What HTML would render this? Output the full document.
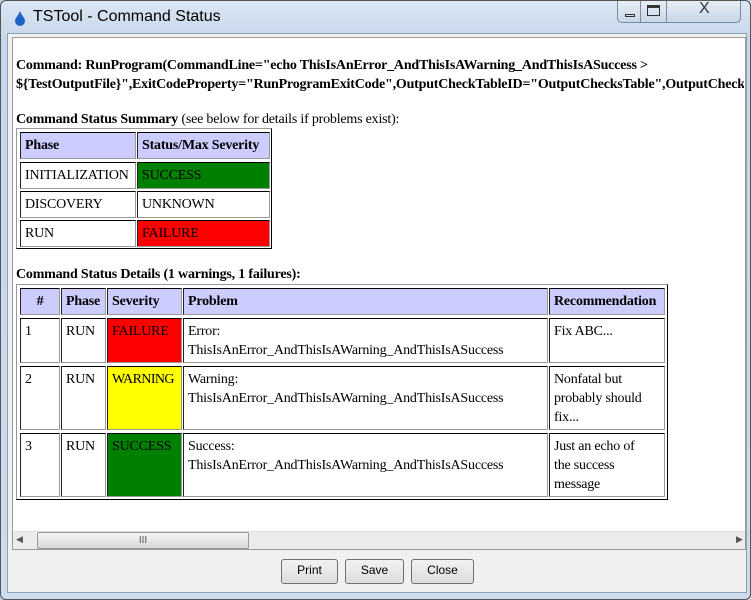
<!DOCTYPE html><html><head><style>
body{margin:0;width:751px;height:600px;overflow:hidden;background:#bcd0e6;font-family:"Liberation Serif",serif;font-size:14px;position:relative}
.a{position:absolute;box-sizing:border-box}
.c{position:absolute;box-sizing:border-box;border:1px solid #000;border-right-color:#999;border-bottom-color:#999;border-left-color:#222;padding:3px 4px;line-height:19px;color:#000;letter-spacing:-0.2px}
.h{background:#ccccff;font-weight:bold}
.btn{position:absolute;top:559px;height:23px;border:1px solid #707070;border-radius:3px;background:linear-gradient(#f2f2f2,#dcdcdc);font-family:"Liberation Sans",sans-serif;font-size:12px;text-align:center;line-height:21px}
</style></head><body>
<div class="a" style="left:0;top:0;width:751px;height:600px;border:1px solid #555;border-radius:6px;background:linear-gradient(#dbe6f3,#c5d6ea 40px,#cddcec)"></div>
<svg class="a" style="left:14px;top:10px" width="12" height="16"><path d="M6 1 C4 6 1 8 1 11 A5 5 0 0 0 11 11 C11 8 8 6 6 1Z" fill="#1d63c6"/></svg>
<div class="a" style="left:33px;top:8px;font-family:'Liberation Sans',sans-serif;font-size:16px;color:#000">TSTool - Command Status</div>
<div class="a" style="left:617px;top:1px;width:124px;height:22px;border:1px solid #7a8ba0;border-top:none;border-radius:0 0 5px 5px;background:linear-gradient(#e8eef6,#c9d6e6)"></div>
<div class="a" style="left:640px;top:1px;width:1px;height:21px;background:#7a8ba0"></div>
<div class="a" style="left:666px;top:1px;width:1px;height:21px;background:#7a8ba0"></div>
<div class="a" style="left:625px;top:14px;width:10px;height:3px;border:1px solid #333"></div>
<div class="a" style="left:647px;top:5px;width:13px;height:11px;border:1px solid #333;border-top-width:3px"></div>
<div class="a" style="left:699px;top:0px;font-family:'Liberation Sans',sans-serif;font-size:16px;color:#333">X</div>
<div class="a" style="left:7px;top:33px;width:740px;height:560px;background:#f0f0f0;border:1px solid #8da0b8"></div>
<div class="a" style="left:12px;top:37px;width:734px;height:513px;background:#fff;border:1px solid #999"></div>
<div class="a" style="left:16px;top:56px;font-weight:bold;white-space:nowrap;line-height:19px;width:728px;overflow:hidden;letter-spacing:-0.2px">Command: RunProgram(CommandLine="echo ThisIsAnError_AndThisIsAWarning_AndThisIsASuccess &gt;<br>${TestOutputFile}",ExitCodeProperty="RunProgramExitCode",OutputCheckTableID="OutputChecksTable",OutputCheckTable</div>
<div class="a" style="left:16px;top:110px;line-height:19px;letter-spacing:-0.2px"><b>Command Status Summary</b> (see below for details if problems exist):</div>
<div class="a" style="left:16px;top:128px;width:256px;height:121px;border:1px solid #999;border-right-color:#000;border-bottom-color:#000"></div>
<div class="c h" style="left:20px;top:132px;width:116px;height:27px">Phase</div>
<div class="c h" style="left:137px;top:132px;width:133px;height:27px">Status/Max Severity</div>
<div class="c" style="left:20px;top:162px;width:116px;height:27px">INITIALIZATION</div>
<div class="c" style="left:137px;top:162px;width:133px;height:27px;background:#008000">SUCCESS</div>
<div class="c" style="left:20px;top:191px;width:116px;height:27px">DISCOVERY</div>
<div class="c" style="left:137px;top:191px;width:133px;height:27px">UNKNOWN</div>
<div class="c" style="left:20px;top:220px;width:116px;height:27px">RUN</div>
<div class="c" style="left:137px;top:220px;width:133px;height:27px;background:#f00">FAILURE</div>
<div class="a" style="left:16px;top:265px;font-weight:bold;line-height:19px;letter-spacing:-0.2px">Command Status Details (1 warnings, 1 failures):</div>
<div class="a" style="left:16px;top:284px;width:652px;height:216px;border:1px solid #999;border-right-color:#000;border-bottom-color:#000"></div>
<div class="c h" style="left:20px;top:288px;width:40px;height:27px;text-align:center">#</div>
<div class="c h" style="left:61px;top:288px;width:45px;height:27px">Phase</div>
<div class="c h" style="left:107px;top:288px;width:75px;height:27px">Severity</div>
<div class="c h" style="left:183px;top:288px;width:365px;height:27px">Problem</div>
<div class="c h" style="left:549px;top:288px;width:116px;height:27px">Recommendation</div>
<div class="c" style="left:20px;top:318px;width:40px;height:45px">1</div>
<div class="c" style="left:61px;top:318px;width:45px;height:45px">RUN</div>
<div class="c" style="left:107px;top:318px;width:75px;height:45px;background:#f00">FAILURE</div>
<div class="c" style="left:183px;top:318px;width:365px;height:45px">Error:<br>ThisIsAnError_AndThisIsAWarning_AndThisIsASuccess</div>
<div class="c" style="left:549px;top:318px;width:116px;height:45px">Fix ABC...</div>
<div class="c" style="left:20px;top:366px;width:40px;height:64px">2</div>
<div class="c" style="left:61px;top:366px;width:45px;height:64px">RUN</div>
<div class="c" style="left:107px;top:366px;width:75px;height:64px;background:#ff0;letter-spacing:-0.6px">WARNING</div>
<div class="c" style="left:183px;top:366px;width:365px;height:64px">Warning:<br>ThisIsAnError_AndThisIsAWarning_AndThisIsASuccess</div>
<div class="c" style="left:549px;top:366px;width:116px;height:64px">Nonfatal but<br>probably should<br>fix...</div>
<div class="c" style="left:20px;top:433px;width:40px;height:64px">3</div>
<div class="c" style="left:61px;top:433px;width:45px;height:64px">RUN</div>
<div class="c" style="left:107px;top:433px;width:75px;height:64px;background:#008000">SUCCESS</div>
<div class="c" style="left:183px;top:433px;width:365px;height:64px">Success:<br>ThisIsAnError_AndThisIsAWarning_AndThisIsASuccess</div>
<div class="c" style="left:549px;top:433px;width:116px;height:64px">Just an echo of<br>the success<br>message</div>
<div class="a" style="left:13px;top:531px;width:732px;height:18px;background:#ececec;border-top:1px solid #ddd"></div>
<div class="a" style="left:16px;top:534px;font-size:9px;color:#555">&#9664;</div>
<div class="a" style="left:736px;top:534px;font-size:9px;color:#555">&#9654;</div>
<div class="a" style="left:37px;top:532px;width:212px;height:17px;border:1px solid #999;border-radius:2px;background:linear-gradient(#f4f4f4,#d8d8d8);text-align:center;font-size:10px;line-height:15px;color:#555;font-family:'Liberation Sans',sans-serif">III</div>
<div class="btn" style="left:281px;width:55px">Print</div>
<div class="btn" style="left:345px;width:57px">Save</div>
<div class="btn" style="left:411px;width:61px">Close</div>
</body></html>
